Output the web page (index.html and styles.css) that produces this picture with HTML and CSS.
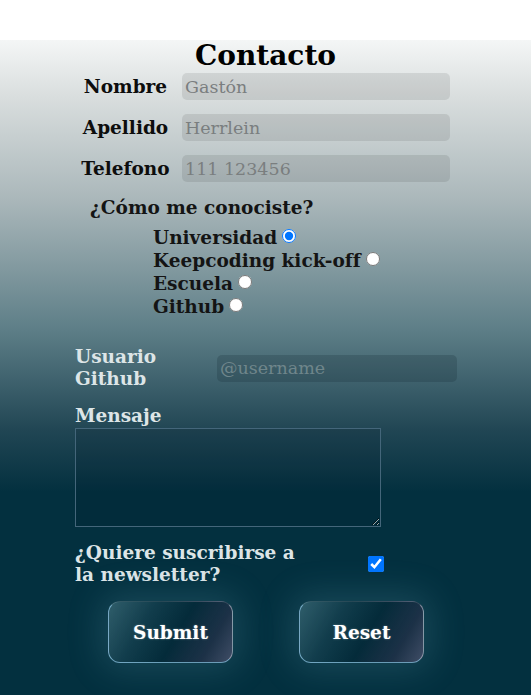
FILE: index.html
```html
<!DOCTYPE html>
<html lang="es">
<head>
<meta charset="utf-8">
<title>Contacto</title>
<link rel="stylesheet" href="styles.css">
</head>
<body>
<form class="page">
  <h1 class="title">Contacto</h1>
  <div class="row">
    <label class="lbl" for="nombre">Nombre</label>
    <input class="field" id="nombre" type="text" placeholder="Gastón">
  </div>
  <div class="row">
    <label class="lbl" for="apellido">Apellido</label>
    <input class="field" id="apellido" type="text" placeholder="Herrlein">
  </div>
  <div class="row">
    <label class="lbl" for="tel">Telefono</label>
    <input class="field" id="tel" type="text" placeholder="111 123456">
  </div>
  <p class="question">¿Cómo me conociste?</p>
  <div class="radios">
    <label class="opt">Universidad<input type="radio" name="how" checked></label>
    <label class="opt">Keepcoding kick-off<input type="radio" name="how"></label>
    <label class="opt">Escuela<input type="radio" name="how"></label>
    <label class="opt">Github<input type="radio" name="how"></label>
  </div>
  <div class="gh-row">
    <label class="light gh-lbl" for="gh">Usuario Github</label>
    <input class="field gh-field" id="gh" type="text" placeholder="@username">
  </div>
  <label class="light msg-lbl" for="msg">Mensaje</label>
  <textarea class="msg" id="msg"></textarea>
  <div class="news-row">
    <label class="light news-lbl" for="news">¿Quiere suscribirse a la newsletter?</label>
    <input class="check" id="news" type="checkbox" checked>
  </div>
  <div class="buttons">
    <button class="btn" type="submit">Submit</button>
    <button class="btn" type="reset">Reset</button>
  </div>
</form>
</body>
</html>
```

FILE: styles.css
```css
html, body {
  margin: 0;
  padding: 0;
  background: #ffffff;
}

body {
  font-family: "DejaVu Serif", "Liberation Serif", serif;
}

.page {
  margin: 40px 0 0 0;
  height: 655px;
  box-sizing: border-box;
  overflow: hidden;
  background: linear-gradient(to bottom,
    #f4f6f6 0%,
    #d8dddd 9%,
    #aab7ba 24.4%,
    #5d7e87 44.3%,
    #214654 59.5%,
    #03303f 69%,
    #03303f 100%);
  display: flex;
  flex-direction: column;
}

.title {
  margin: 0;
  font-size: 28px;
  line-height: 32px;
  font-weight: bold;
  text-align: center;
  color: #000;
}

.row {
  display: flex;
  align-items: center;
  height: 27px;
  margin-top: 14px;
  padding-left: 75px;
}

.row:first-of-type {
  margin-top: 1px;
}

.lbl {
  width: 101px;
  margin-right: 6px;
  text-align: center;
  font-weight: bold;
  font-size: 18.5px;
  color: #0d0d0d;
  white-space: nowrap;
}

.field {
  box-sizing: border-box;
  width: 268px;
  height: 27px;
  border: none;
  border-radius: 5px;
  background: rgba(0, 0, 0, 0.09);
  padding: 0 3px;
  font-family: "DejaVu Serif", "Liberation Serif", serif;
  font-size: 17.5px;
  color: #333;
  outline: none;
}

.field::placeholder {
  color: #7a7e7f;
}

.question {
  margin: 14px 0 0 90px;
  line-height: 23px;
  font-size: 18.5px;
  font-weight: bold;
  color: #141414;
}

.radios {
  margin: 7px 0 0 153px;
  display: flex;
  flex-direction: column;
}

.opt {
  display: flex;
  align-items: center;
  height: 23px;
  font-size: 18.5px;
  font-weight: bold;
  color: #141414;
  white-space: nowrap;
}

.opt input {
  margin: 0 0 4px 5px;
  width: 14px;
  height: 14px;
}

.light {
  color: #dde5e7;
  font-weight: bold;
  font-size: 18.5px;
  line-height: 22px;
}

.gh-row {
  display: flex;
  align-items: center;
  margin: 28px 0 0 75px;
}

.gh-lbl {
  width: 100px;
  margin-right: 42px;
}

.gh-field {
  width: 240px;
  background: rgba(20, 40, 50, 0.22);
}

.gh-field::placeholder {
  color: #6f868b;
}

.msg-lbl {
  margin: 15px 0 0 75px;
  display: block;
}

.msg {
  display: block;
  box-sizing: border-box;
  width: 306px;
  height: 99px;
  margin: 1px 0 0 75px;
  border: 1px solid #44667a;
  background: rgba(0, 20, 30, 0.12);
  color: #dbe3e5;
  outline: none;
}

.news-row {
  display: flex;
  align-items: center;
  margin: 15px 0 0 75px;
}

.news-lbl {
  width: 225px;
  margin-right: 68px;
}

.check {
  margin: 0;
  width: 16px;
  height: 16px;
}

.buttons {
  display: flex;
  gap: 66px;
  margin: 15px 0 0 108px;
}

.btn {
  box-sizing: border-box;
  width: 125px;
  height: 62px;
  border-radius: 12px;
  border: 1px solid rgba(255, 255, 255, 0.15);
  border-left-color: rgba(140, 195, 225, 0.8);
  border-bottom-color: rgba(140, 195, 225, 0.75);
  border-right-color: rgba(200, 200, 215, 0.6);
  background: linear-gradient(120deg,
    rgba(130, 180, 190, 0.35) 0%,
    rgba(60, 100, 115, 0.25) 30%,
    rgba(5, 40, 55, 0.6) 55%,
    rgba(40, 50, 75, 0.7) 80%,
    rgba(90, 90, 120, 0.7) 100%);
  box-shadow: 0 0 34px 8px rgba(110, 170, 190, 0.2);
  color: #ffffff;
  font-family: "DejaVu Serif", "Liberation Serif", serif;
  font-weight: bold;
  font-size: 18.5px;
  text-shadow: 0 0 2px rgba(255, 255, 255, 0.4);
  cursor: pointer;
}
```
